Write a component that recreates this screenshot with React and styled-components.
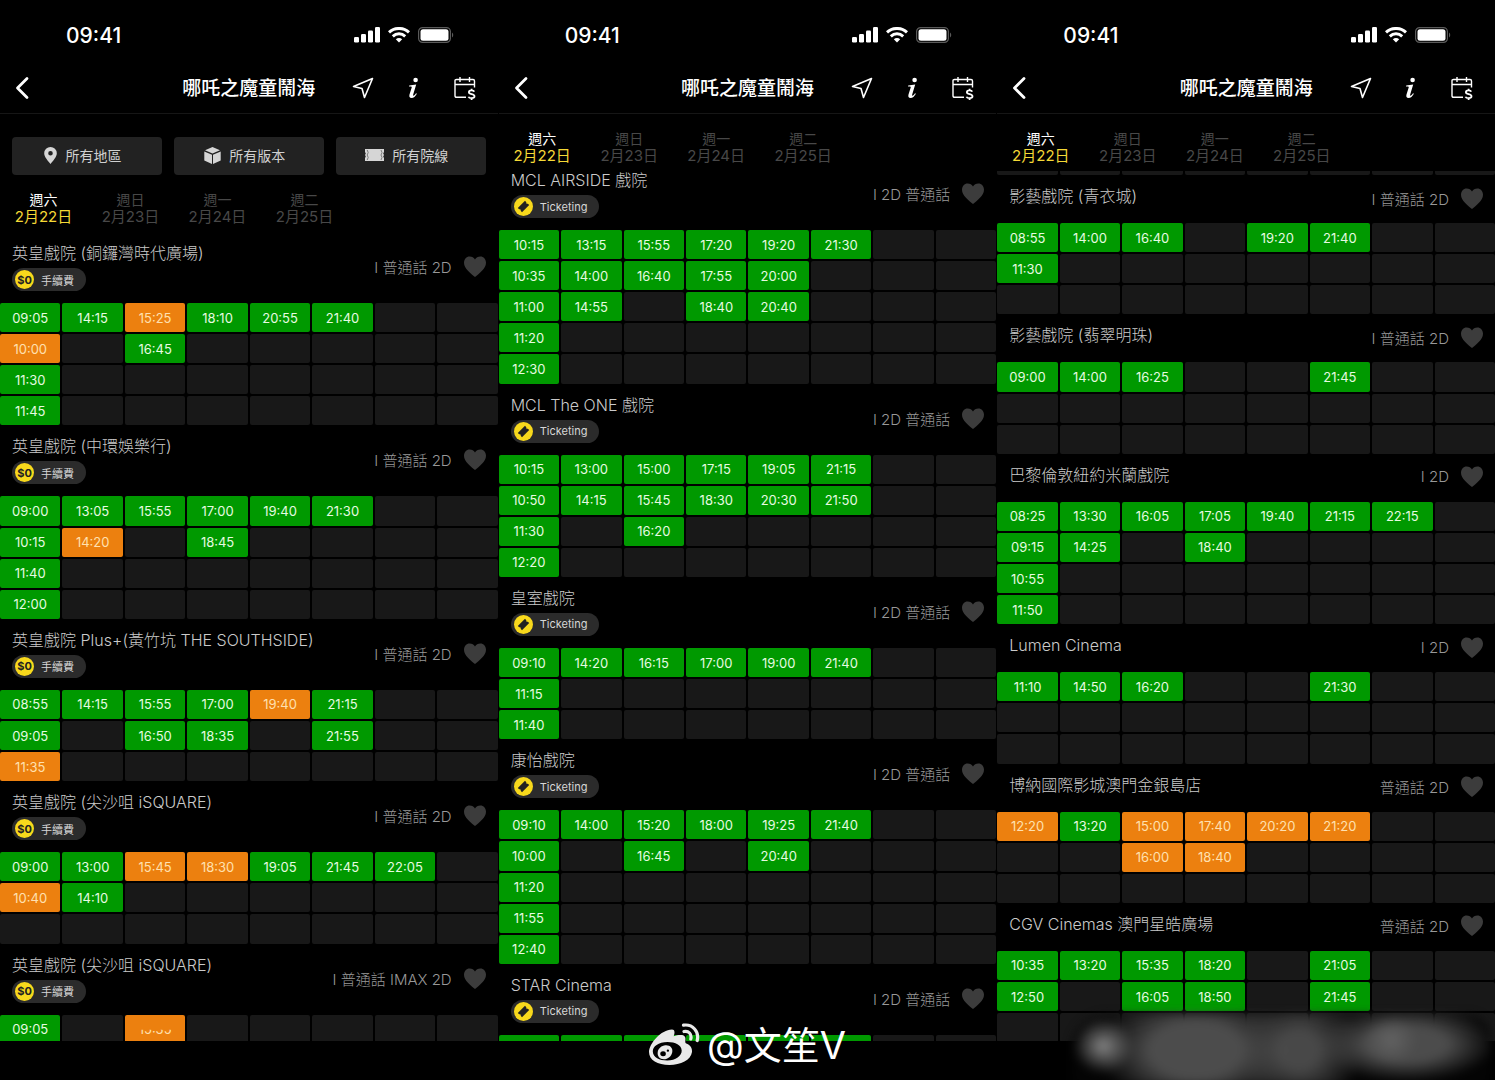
import React from "react";
import styled, { createGlobalStyle, css } from "styled-components";

const GlobalStyle = createGlobalStyle`
  *, *::before, *::after { box-sizing: border-box; }
  body {
    margin: 0;
    background: #000;
    color: #fff;
    font-family: Inter, "Noto Sans CJK TC", sans-serif;
  }
  button { font: inherit; color: inherit; border: 0; padding: 0; background: none; }
  h1, h2, p { margin: 0; font-weight: inherit; }
`;

const Board = styled.main`
  position: relative;
  display: grid;
  grid-template-columns: repeat(3, minmax(0, 1fr));
  gap: 1px;
  height: 100vh;
  overflow: hidden;
`;

const Screen = styled.section`
  display: flex;
  flex-direction: column;
  min-height: 0;
  padding-bottom: 39px;
`;

const StatusBar = styled.div`
  display: flex;
  flex: none;
  align-items: center;
  justify-content: space-between;
  height: 62px;
  padding: 8px 44px 0 66px;
  font-size: 21px;
  font-weight: 500;
`;

const StatusIcons = styled.div`
  display: flex;
  align-items: center;
  gap: 8px;
`;

const NavBar = styled.header`
  display: grid;
  flex: none;
  grid-template-columns: 1fr auto 1fr;
  align-items: center;
  height: 52px;
  padding: 0 9px;
  border-bottom: 1px solid #161616;
`;

const NavTitle = styled.h1`
  padding-top: 2px;
  font-size: 19px;
  line-height: 28px;
  font-weight: 500;
`;

const NavActions = styled.div`
  display: flex;
  align-items: center;
  justify-content: space-between;
  padding: 0 11px 0 35px;
`;

const IconButton = styled.button`
  display: flex;
  align-items: center;
  justify-content: center;
  width: 26px;
  height: 28px;
`;

const Filters = styled.div`
  display: grid;
  flex: none;
  grid-template-columns: repeat(3, 1fr);
  gap: 12px;
  padding: 23px 12px 0;
`;

const FilterButton = styled.button`
  display: flex;
  align-items: center;
  justify-content: center;
  gap: 8px;
  height: 38px;
  padding: 0 8px 2px 0;
  border-radius: 4px;
  background: #222;
  color: #d0d0d0;
  font-size: 14px;
`;

const DateTabs = styled.nav`
  display: flex;
  flex: none;
  padding: 16px 0 7px;
`;

const DateTab = styled.button`
  width: 87px;
  color: ${(p) => (p.$active ? "#fff" : "#484848")};
  font-size: 14px;
  line-height: 17px;
`;

const DateLabel = styled.span`
  display: block;
  color: ${(p) => (p.$active ? "#f5d936" : "inherit")};
  font-size: 15px;
`;

const Listing = styled.div`
  flex: 1;
  min-height: 0;
  overflow: hidden;
`;

const ListingContent = styled.div`
  margin-top: ${(p) => -p.$scrolled}px;
`;

const CinemaHeader = styled.div`
  display: flex;
  justify-content: space-between;
  height: ${(p) => (p.$tall ? 71 : 48)}px;
  padding: 0 11px 0 12px;
`;

const CinemaInfo = styled.div`
  display: flex;
  flex-direction: column;
  align-items: flex-start;
  gap: 5px;
  padding-top: 11px;
`;

const CinemaName = styled.h2`
  color: #cacaca;
  font-size: 16px;
  line-height: 20px;
  font-weight: 300;
`;

const Badge = styled.span`
  display: flex;
  align-items: center;
  gap: 7px;
  height: 23px;
  padding: 0 12px 0 3px;
  border-radius: 12px;
  background: #2b2b2b;
  color: #d6d6d6;
  font-size: 11px;
`;

const Coin = styled.span`
  display: flex;
  align-items: center;
  justify-content: center;
  width: 19px;
  height: 19px;
  border-radius: 50%;
  background: #f8d91c;
  color: #222;
  font-weight: 700;
`;

const CinemaSide = styled.div`
  display: flex;
  align-items: center;
  gap: 11px;
  padding-bottom: 2px;
  color: #989898;
  font-size: 15px;
  font-weight: 300;
`;

const HeartButton = styled.button`
  display: flex;
`;

const TimeGrid = styled.div`
  display: grid;
  grid-template-columns: repeat(8, minmax(0, 1fr));
  gap: 2px;
`;

const slot = css`
  display: flex;
  align-items: center;
  justify-content: center;
  aspect-ratio: 27 / 13;
  border-radius: 2px;
`;

const EmptySlot = styled.span`
  ${slot}
  background: #181818;
`;

const TimeButton = styled.button`
  ${slot}
  background: ${(p) => (p.$busy ? "#ec800f" : "#009900")};
  color: ${(p) => (p.$busy ? "#ffe0b0" : "#e6fbe0")};
  font-size: 13px;
`;

const HalfText = styled.span`
  clip-path: inset(54% 0 0 0);
`;

const Watermark = styled.p`
  position: absolute;
  bottom: 8px;
  left: 0;
  right: 0;
  display: flex;
  align-items: center;
  justify-content: center;
  gap: 6px;
  font-size: 38px;
  line-height: 54px;
`;

const Smudge = styled.div`
  position: absolute;
  right: 4px;
  bottom: -6px;
  width: 420px;
  height: 72px;
  border-radius: 36px 24px 0 0;
  background:
    radial-gradient(ellipse 30px 28px at 32px 32px, #858585, transparent),
    radial-gradient(ellipse 26px 24px at 320px 26px, #626262, transparent),
    radial-gradient(ellipse 100px 60px at 125px 36px, #4c4c4c 45%, transparent),
    radial-gradient(ellipse 64px 60px at 228px 36px, #484848 30%, transparent),
    radial-gradient(ellipse 90px 38px at 335px 30px, #4c4c4c 45%, transparent),
    linear-gradient(rgba(12, 12, 12, 0.75), rgba(4, 4, 4, 0.95) 30%);
  filter: blur(4px);
`;

const HeartIcon = () => (
  <svg width="24" height="21" viewBox="0 0 24 21" fill="#3c3c3c" aria-hidden="true">
    <path d="M12 21C8 17.5 1 12.6 1 6.700C1 3 3.500.4 6.600.4C9 .4 11 1.600 12 3.600C13 1.600 15 .4 17.400.4C20.500.4 23 3 23 6.700C23 12.600 16 17.500 12 21Z" />
  </svg>
);

const SignalIcon = () => (
  <svg width="26" height="16" viewBox="0 0 26 16" fill="#fff" aria-hidden="true">
    <rect x="0" y="10" width="5" height="5.500" rx="1.200" />
    <rect x="7" y="7" width="5" height="8.500" rx="1.200" />
    <rect x="14" y="3.500" width="5" height="12" rx="1.200" />
    <rect x="21" y="0" width="5" height="15.500" rx="1.200" />
  </svg>
);

const WifiIcon = () => (
  <svg width="22" height="16" viewBox="0 0 22 16" fill="none" stroke="#fff" strokeWidth="3" aria-hidden="true">
    <path d="M1 5.300C6.500.2 15.500.2 21 5.300" />
    <path d="M4.800 9.300C8.400 6 13.600 6 17.200 9.300" />
    <path d="M11 15.500L7.800 12.300C9.700 10.700 12.300 10.700 14.200 12.300Z" fill="#fff" stroke="none" />
  </svg>
);

const BatteryIcon = () => (
  <svg width="36" height="16" viewBox="0 0 36 16" aria-hidden="true">
    <rect x=".6" y=".6" width="31.800" height="14.800" rx="4" fill="none" stroke="#5a5a5a" strokeWidth="1.200" />
    <rect x="2.500" y="2.300" width="28" height="11.400" rx="2.500" fill="#fff" />
    <path d="M34 5.500C35.600 6.200 35.600 9.800 34 10.500Z" fill="#5a5a5a" />
  </svg>
);

const BackIcon = () => (
  <svg width="20" height="24" viewBox="0 0 20 24" fill="none" stroke="#fff" strokeWidth="2.800" strokeLinecap="round" strokeLinejoin="round" aria-hidden="true">
    <path d="M15 2.500L5.500 12L15 21.500" />
  </svg>
);

const ArrowIcon = () => (
  <svg width="22" height="22" viewBox="0 0 22 22" fill="none" stroke="#fff" strokeWidth="1.600" strokeLinejoin="round" aria-hidden="true">
    <path d="M20.500 1.500L1.500 9.500L10 11.500L12.500 20.500Z" />
  </svg>
);

const InfoIcon = () => (
  <svg width="14" height="22" viewBox="0 0 14 22" fill="#fff" aria-hidden="true">
    <circle cx="8.600" cy="3" r="2.300" />
    <path d="M2.200 8.600L9.200 7.600L6.200 17.400C5.900 18.700 6.500 19 7.300 18.300C7.900 17.800 8.500 17 9 16.200L9.900 16.800C8.300 19.600 6.600 21 4.600 21C2.600 21 1.900 19.600 2.500 17.600L4.700 10.500C5 9.500 4.500 9.300 2 9.400Z" />
  </svg>
);

const CalendarIcon = () => (
  <svg width="22" height="24" viewBox="0 0 22 24" fill="none" stroke="#fff" strokeWidth="1.400" aria-hidden="true">
    <path d="M12 21.300H2.500Q1 21.300 1 19.800V4.500Q1 3.500 2.500 3.500H19Q20.500 3.500 20.500 5V11.500M1 8.500H20.500M6 1V6M15.500 1V6" />
    <path d="M20.300 15.600C19.500 14 14.900 13.800 14.900 16.200C14.900 18.800 20.500 17.500 20.500 20.300C20.500 22.800 15.200 22.600 14.500 20.700M17.600 12.700V14.500M17.600 22V24" strokeWidth="1.800" />
  </svg>
);

const PinIcon = () => (
  <svg width="13" height="17" viewBox="0 0 13 17" aria-hidden="true">
    <path fillRule="evenodd" fill="#d6d6d6" d="M6.500 0A6.300 6.300 0 0 1 12.800 6.300C12.800 10 9 14 6.500 17C4 14 .2 10 .2 6.300A6.300 6.300 0 0 1 6.500 0ZM6.500 4A2.300 2.300 0 1 0 6.500 8.600A2.300 2.300 0 0 0 6.500 4Z" />
  </svg>
);

const BoxIcon = () => (
  <svg width="17" height="17" viewBox="0 0 17 17" fill="#d6d6d6" aria-hidden="true">
    <path d="M8.500 0L16 3.200L8.500 6.500L1 3.200ZM.3 4.400L8 7.700V17L.3 13.500ZM16.700 4.400L9 7.700V17L16.700 13.500Z" />
  </svg>
);

const TicketIcon = () => (
  <svg width="19" height="12" viewBox="0 0 19 12" aria-hidden="true">
    <path fill="#d6d6d6" d="M0 0H19V3L18.200 4.500L19 6L18.200 7.500L19 9V12H0V9L.8 7.500L0 6L.8 4.500L0 3Z" />
    <path d="M2.200 1L3.200 3.500L2.200 6L3.200 8.500L2.200 11M16 1L17 3.500L16 6L17 8.500L16 11" fill="none" stroke="#666" strokeWidth=".8" />
  </svg>
);

const CoinTicketIcon = () => (
  <svg width="13" height="13" viewBox="0 0 13 13" aria-hidden="true">
    <path fill="#222" d="M8 .8L9.300 2.200C9 3.400 9.800 4 10.800 3.700L12.200 5.100L5 12.200L3.700 10.800C4 9.600 3.200 9 2.200 9.300L.8 7.900Z" />
  </svg>
);

const WeiboIcon = () => (
  <svg width="52" height="44" viewBox="0 0 52 44" aria-hidden="true">
    <path fill="#e9e9e9" fillRule="evenodd" d="M23 6.500C26 6.500 26 10 24.700 13.300C29 12 35 11 36.300 14.500C37 16.500 35.500 19 36.800 20.300C39.500 21.500 43.500 23.500 43 29C42 37 31.500 42 20.500 42C8.500 42 0 37 0 29C0 21 12 6.500 23 6.500ZM18.500 19C9.500 19 3.500 23.500 3.800 28.800C4.200 34.500 10.500 37.600 18.500 37.500C26.500 37.300 32.900 33 32.700 27.500C32.400 22 26.500 19 18.500 19Z" />
    <path fill="#e9e9e9" fillRule="evenodd" d="M16.500 22.300C21 22 24 25 23.300 29C22.500 33.300 19 36.300 14.800 36.300C10.500 36.300 8.200 33 8.700 29.300C9.200 25.500 12.500 22.500 16.500 22.300ZM14 28.200A2.800 2.500 0 1 0 14.100 33.200A2.800 2.500 0 0 0 14 28.200ZM18.900 26.600A1.200 1.100 0 1 0 18.900 28.800A1.200 1.100 0 0 0 18.900 26.600Z" />
    <path d="M35 8.500C39.500 7.500 43 11 41.800 16M34.500 2.200C43.500.8 50.500 8.500 48.200 17.500" fill="none" stroke="#e9e9e9" strokeWidth="3.200" strokeLinecap="round" />
  </svg>
);

const EMPTY = "- - - - - - - -";
const FEE = "fee";
const TICKETING = "ticketing";

/* Each row has eight slots: "-" is free space, "+" a session with no time yet,
   "*" marks a session that is filling up and "~" one whose time is half hidden. */
const SCREENS = [
  {
    id: "emperor",
    filters: true,
    scrolled: 0,
    cinemas: [
      { name: "英皇戲院 (銅鑼灣時代廣場)", badge: FEE, version: "I 普通話 2D", rows: ["09:05 14:15 *15:25 18:10 20:55 21:40 - -", "*10:00 - 16:45 - - - - -", "11:30 - - - - - - -", "11:45 - - - - - - -"] },
      { name: "英皇戲院 (中環娛樂行)", badge: FEE, version: "I 普通話 2D", rows: ["09:00 13:05 15:55 17:00 19:40 21:30 - -", "10:15 *14:20 - 18:45 - - - -", "11:40 - - - - - - -", "12:00 - - - - - - -"] },
      { name: "英皇戲院 Plus+(黃竹坑 THE SOUTHSIDE)", badge: FEE, version: "I 普通話 2D", rows: ["08:55 14:15 15:55 17:00 *19:40 21:15 - -", "09:05 - 16:50 18:35 - 21:55 - -", "*11:35 - - - - - - -"] },
      { name: "英皇戲院 (尖沙咀 iSQUARE)", badge: FEE, version: "I 普通話 2D", rows: ["09:00 13:00 *15:45 *18:30 19:05 21:45 22:05 -", "*10:40 14:10 - - - - - -", EMPTY] },
      { name: "英皇戲院 (尖沙咀 iSQUARE)", badge: FEE, version: "I 普通話 IMAX 2D", rows: ["09:05 - *~15:35 - - - - -"] },
    ],
  },
  {
    id: "mcl",
    scrolled: 12,
    cinemas: [
      { name: "MCL AIRSIDE 戲院", badge: TICKETING, version: "I 2D 普通話", rows: ["10:15 13:15 15:55 17:20 19:20 21:30 - -", "10:35 14:00 16:40 17:55 20:00 - - -", "11:00 14:55 - 18:40 20:40 - - -", "11:20 - - - - - - -", "12:30 - - - - - - -"] },
      { name: "MCL The ONE 戲院", badge: TICKETING, version: "I 2D 普通話", rows: ["10:15 13:00 15:00 17:15 19:05 21:15 - -", "10:50 14:15 15:45 18:30 20:30 21:50 - -", "11:30 - 16:20 - - - - -", "12:20 - - - - - - -"] },
      { name: "皇室戲院", badge: TICKETING, version: "I 2D 普通話", rows: ["09:10 14:20 16:15 17:00 19:00 21:40 - -", "11:15 - - - - - - -", "11:40 - - - - - - -"] },
      { name: "康怡戲院", badge: TICKETING, version: "I 2D 普通話", rows: ["09:10 14:00 15:20 18:00 19:25 21:40 - -", "10:00 - 16:45 - 20:40 - - -", "11:20 - - - - - - -", "11:55 - - - - - - -", "12:40 - - - - - - -"] },
      { name: "STAR Cinema", badge: TICKETING, version: "I 2D 普通話", rows: ["+ + + + + + - -"] },
    ],
  },
  {
    id: "others",
    scrolled: 25,
    leadingRow: true,
    cinemas: [
      { name: "影藝戲院 (青衣城)", version: "I 普通話 2D", rows: ["08:55 14:00 16:40 - 19:20 21:40 - -", "11:30 - - - - - - -", EMPTY] },
      { name: "影藝戲院 (翡翠明珠)", version: "I 普通話 2D", rows: ["09:00 14:00 16:25 - - 21:45 - -", EMPTY, EMPTY] },
      { name: "巴黎倫敦紐約米蘭戲院", version: "I 2D", rows: ["08:25 13:30 16:05 17:05 19:40 21:15 22:15 -", "09:15 14:25 - 18:40 - - - -", "10:55 - - - - - - -", "11:50 - - - - - - -"] },
      { name: "Lumen Cinema", version: "I 2D", rows: ["11:10 14:50 16:20 - - 21:30 - -", EMPTY, EMPTY] },
      { name: "博納國際影城澳門金銀島店", version: "普通話 2D", rows: ["*12:20 13:20 *15:00 *17:40 *20:20 *21:20 - -", "- - *16:00 *18:40 - - - -", EMPTY] },
      { name: "CGV Cinemas 澳門星皓廣場", version: "普通話 2D", rows: ["10:35 13:20 15:35 18:20 - 21:05 - -", "12:50 - 16:05 18:50 - 21:45 - -", EMPTY] },
    ],
  },
];

const DATES = [
  ["週六", "2月22日"],
  ["週日", "2月23日"],
  ["週一", "2月24日"],
  ["週二", "2月25日"],
];

function Slot({ code }) {
  if (code === "-") return <EmptySlot />;
  if (code === "+") return <TimeButton aria-label="場次" />;
  const time = code.replace(/[*~]/g, "");
  return (
    <TimeButton $busy={code.startsWith("*")}>
      {code.includes("~") ? <HalfText>{time}</HalfText> : time}
    </TimeButton>
  );
}

function Times({ rows }) {
  return (
    <TimeGrid>
      {rows.flatMap((row, r) => row.split(" ").map((code, c) => <Slot key={`${r}-${c}`} code={code} />))}
    </TimeGrid>
  );
}

function Cinema({ name, badge, version, rows }) {
  return (
    <article>
      <CinemaHeader $tall={Boolean(badge)}>
        <CinemaInfo>
          <CinemaName>{name}</CinemaName>
          {badge === FEE && <Badge><Coin>$0</Coin>手續費</Badge>}
          {badge === TICKETING && <Badge><Coin><CoinTicketIcon /></Coin>Ticketing</Badge>}
        </CinemaInfo>
        <CinemaSide>
          <span>{version}</span>
          <HeartButton aria-label="收藏"><HeartIcon /></HeartButton>
        </CinemaSide>
      </CinemaHeader>
      <Times rows={rows} />
    </article>
  );
}

function Phone({ filters, scrolled, leadingRow, cinemas }) {
  return (
    <Screen>
      <StatusBar>
        <span>09:41</span>
        <StatusIcons><SignalIcon /><WifiIcon /><BatteryIcon /></StatusIcons>
      </StatusBar>
      <NavBar>
        <IconButton aria-label="返回"><BackIcon /></IconButton>
        <NavTitle>哪吒之魔童鬧海</NavTitle>
        <NavActions>
          <IconButton aria-label="分享"><ArrowIcon /></IconButton>
          <IconButton aria-label="資料"><InfoIcon /></IconButton>
          <IconButton aria-label="購票"><CalendarIcon /></IconButton>
        </NavActions>
      </NavBar>
      {filters && (
        <Filters>
          <FilterButton><PinIcon />所有地區</FilterButton>
          <FilterButton><BoxIcon />所有版本</FilterButton>
          <FilterButton><TicketIcon />所有院線</FilterButton>
        </Filters>
      )}
      <DateTabs>
        {DATES.map(([day, date], i) => (
          <DateTab key={date} $active={i === 0}>
            {day}
            <DateLabel $active={i === 0}>{date}</DateLabel>
          </DateTab>
        ))}
      </DateTabs>
      <Listing>
        <ListingContent $scrolled={scrolled}>
          {leadingRow && <Times rows={[EMPTY]} />}
          {cinemas.map((cinema, i) => <Cinema key={i} {...cinema} />)}
        </ListingContent>
      </Listing>
    </Screen>
  );
}

export default function App() {
  return (
    <>
      <GlobalStyle />
      <Board>
        {SCREENS.map((screen) => <Phone key={screen.id} {...screen} />)}
        <Smudge />
        <Watermark><WeiboIcon />@文笙V</Watermark>
      </Board>
    </>
  );
}
